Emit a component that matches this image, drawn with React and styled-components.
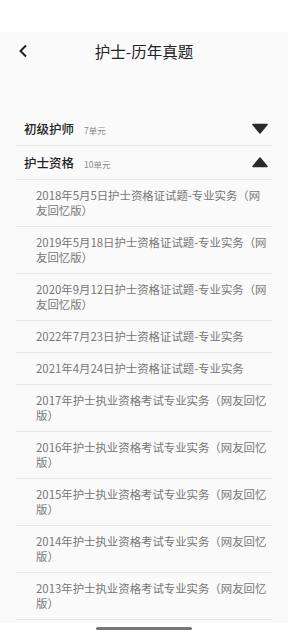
import React, { useState } from "react";
import styled, { createGlobalStyle } from "styled-components";

const GlobalStyle = createGlobalStyle`
  html, body {
    margin: 0;
    padding: 0;
    background: #ffffff;
  }
  body {
    font-family: "Noto Sans CJK SC", "Noto Sans", sans-serif;
  }
`;

const sections = [
  { title: "初级护师", units: 7, items: [] },
  {
    title: "护士资格",
    units: 10,
    items: [
      "2018年5月5日护士资格证试题-专业实务（网友回忆版）",
      "2019年5月18日护士资格证试题-专业实务（网友回忆版）",
      "2020年9月12日护士资格证试题-专业实务（网友回忆版）",
      "2022年7月23日护士资格证试题-专业实务",
      "2021年4月24日护士资格证试题-专业实务",
      "2017年护士执业资格考试专业实务（网友回忆版）",
      "2016年护士执业资格考试专业实务（网友回忆版）",
      "2015年护士执业资格考试专业实务（网友回忆版）",
      "2014年护士执业资格考试专业实务（网友回忆版）",
      "2013年护士执业资格考试专业实务（网友回忆版）",
    ],
  },
];

const App = () => {
  const [open, setOpen] = useState({ 0: false, 1: true });

  return (
    <>
      <GlobalStyle />
      <Screen>
        <StatusBar />
        <Page>
          <Header>
            <Back aria-label="back">
              <svg width="10" height="14" viewBox="0 0 10 14">
                <path d="M8 1.5L2.5 7L8 12.5" fill="none" stroke="#222" strokeWidth="2" />
              </svg>
            </Back>
            <Title>护士-历年真题</Title>
          </Header>
          <List>
            {sections.map((s, i) => (
              <Section key={s.title}>
                <SectionRow onClick={() => setOpen({ ...open, [i]: !open[i] })}>
                  <SectionTitle>{s.title}</SectionTitle>
                  <Units>{s.units}单元</Units>
                  <Arrow $up={open[i]}>
                    <svg width="16" height="11" viewBox="0 0 16 11">
                      <path d="M1 1.5H15L8 10Z" fill="#2b2b2b" stroke="#2b2b2b" strokeWidth="1.5" strokeLinejoin="round" />
                    </svg>
                  </Arrow>
                </SectionRow>
                {open[i] &&
                  s.items.map((item) => <Item key={item}>{item}</Item>)}
              </Section>
            ))}
          </List>
        </Page>
        <NavArea>
          <NavBar />
        </NavArea>
      </Screen>
    </>
  );
};

export default App;

const Screen = styled.div`
  width: 288px;
  height: 640px;
  display: flex;
  flex-direction: column;
  overflow: hidden;
`;

const StatusBar = styled.div`
  height: 32px;
  flex-shrink: 0;
  background: #ffffff;
`;

const Page = styled.div`
  flex: 1;
  background: #fafafa;
  overflow: hidden;
`;

const Header = styled.div`
  position: relative;
  height: 38px;
  display: flex;
  align-items: center;
  justify-content: center;
`;

const Back = styled.div`
  position: absolute;
  left: 18px;
  top: 12px;
  display: flex;
`;

const Title = styled.div`
  font-size: 15.5px;
  line-height: 20px;
  color: #222;
`;

const List = styled.div`
  padding: 42px 16px 0;
`;

const Section = styled.div``;

const SectionRow = styled.div`
  height: 33px;
  display: flex;
  align-items: center;
  padding-left: 8px;
  border-bottom: 1px solid #e6e6e6;
  cursor: pointer;
`;

const SectionTitle = styled.span`
  font-size: 12.5px;
  line-height: 16px;
  font-weight: 500;
  color: #222;
`;

const Units = styled.span`
  font-size: 8.5px;
  line-height: 12px;
  color: #888;
  margin-left: 10px;
  margin-top: 2px;
`;

const Arrow = styled.span`
  margin-left: auto;
  margin-right: 4px;
  display: flex;
  transform: ${(p) => (p.$up ? "rotate(180deg)" : "none")};
`;

const Item = styled.div`
  padding: 8px 3px 8px 20px;
  font-size: 11.4px;
  line-height: 15px;
  color: #777;
  border-bottom: 1px solid #e6e6e6;
`;

const NavArea = styled.div`
  height: 13px;
  flex-shrink: 0;
  background: #ffffff;
  display: flex;
  justify-content: center;
  padding-top: 4px;
`;

const NavBar = styled.div`
  width: 96px;
  height: 3px;
  background: #777;
  border-radius: 2px;
`;
